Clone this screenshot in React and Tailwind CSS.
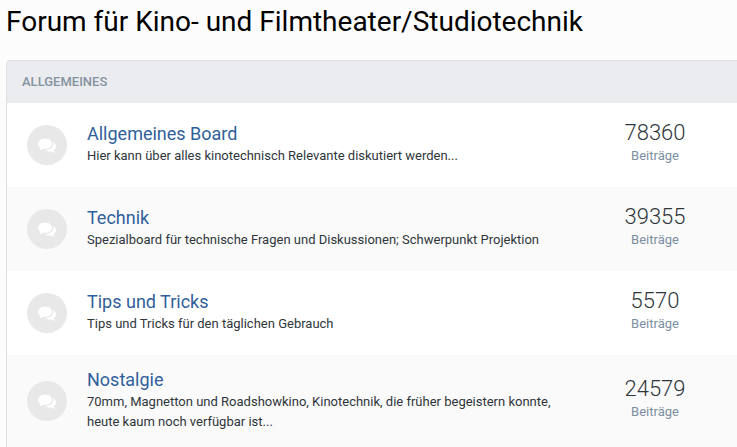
const forums = [
  {
    name: 'Allgemeines Board',
    description: 'Hier kann über alles kinotechnisch Relevante diskutiert werden...',
    posts: 78360
  },
  {
    name: 'Technik',
    description: 'Spezialboard für technische Fragen und Diskussionen; Schwerpunkt Projektion',
    posts: 39355
  },
  {
    name: 'Tips und Tricks',
    description: 'Tips und Tricks für den täglichen Gebrauch',
    posts: 5570
  },
  {
    name: 'Nostalgie',
    description: '70mm, Magnetton und Roadshowkino, Kinotechnik, die früher begeistern konnte, heute kaum noch verfügbar ist...',
    posts: 24579
  }
];

const CommentsIcon = ({ className }) => (
  <svg viewBox="0 0 1792 1792" fill="currentColor" aria-hidden="true" className={className}>
    <path d="M1408 768q0 139-94 257t-256.5 186.5-353.5 68.5q-86 0-176-16-124 88-278 128-36 9-86 16h-3q-11 0-20.5-8t-11.5-21q-1-3-1-6.5t.5-6.5 2-6l2.5-5 3.5-5.5 4-5 4.5-5 4-4.5q5-6 23-25t26-29.5 22.5-29 25-38.5 20.5-44q-124-72-195-177t-71-224q0-139 94-257t256.5-186.5 353.5-68.5 353.5 68.5 256.5 186.5 94 257zm384 256q0 120-71 224.5t-195 176.5q10 24 20.5 44t25 38.5 22.5 29 26 29.5 23 25q1 1 4 4.5t4.5 5 4 5 3.5 5.5l2.5 5 2 6 .5 6.5-1 6.5q-3 14-13 22t-22 7q-50-7-86-16-154-40-278-128-90 16-176 16-271 0-472-132 58 4 88 4 161 0 309-45t264-129q125-92 192-212t67-254q0-77-23-152 129 71 204 178t75 230z" />
  </svg>
);

const ForumRow = ({ forum }) => (
  <li className="flex items-center min-h-[84px] py-[13px] pl-5 pr-8 odd:bg-white even:bg-[#fafafa]">
    <span className="flex items-center justify-center shrink-0 size-10 mr-5 rounded-full bg-[#e8e8e8] text-white">
      <CommentsIcon className="size-[18px]" />
    </span>
    <div className="flex-1 min-w-0 pb-0.5">
      <h3 className="text-lg leading-6">
        <a href="#" className="text-[#305f9b]">{forum.name}</a>
      </h3>
      <p className="max-w-[480px] text-[13px] leading-5 text-[#2f363b]">{forum.description}</p>
    </div>
    <dl className="flex flex-col shrink-0 w-[100px] pb-0.5 text-center">
      <dt className="order-2 text-[13px] leading-[22px] text-[#7c8ea1]">Beiträge</dt>
      <dd className="text-[22px] leading-6 font-light text-[#2f363b]">{forum.posts}</dd>
    </dl>
  </li>
);

const App = () => (
  <main className="min-h-screen overflow-hidden pl-1.5 bg-[#fcfcfc] font-['Roboto',sans-serif]">
    <h1 className="pt-1 mb-5 text-[28px] leading-9 text-black">Forum für Kino- und Filmtheater/Studiotechnik</h1>
    <section className="border-l border-t border-[#dddfe2] rounded-tl overflow-hidden">
      <h2 className="px-[15px] text-[13px] leading-[42px] font-medium uppercase bg-[#ebecf0] text-[#8593a1]">Allgemeines</h2>
      <ol>
        {forums.map((f) => (
          <ForumRow key={f.name} forum={f} />
        ))}
      </ol>
    </section>
  </main>
);

export default App;
